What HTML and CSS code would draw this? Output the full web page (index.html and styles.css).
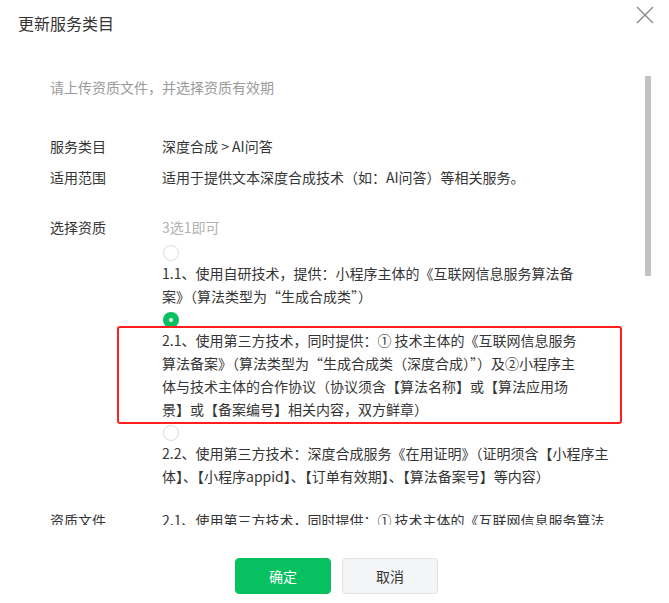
FILE: index.html
```html
<!DOCTYPE html>
<html lang="zh-CN">
<head>
  <meta charset="UTF-8" />
  <meta name="viewport" content="width=device-width, initial-scale=1.0" />
  <title>更新服务类目</title>
  <link rel="stylesheet" href="styles.css">
</head>
<body>
  <div class="dialog">
    <div class="dialog-hd">
      <h3 class="dialog-title">更新服务类目</h3>
      <button class="dialog-close" title="关闭">
        <svg width="18" height="18" viewBox="0 0 18 18"><path d="M1 1L17 17M17 1L1 17" stroke="#8a8a8a" stroke-width="1.4" fill="none"/></svg>
      </button>
    </div>

    <div class="dialog-bd">
      <p class="tips">请上传资质文件，并选择资质有效期</p>

      <div class="info">
        <div class="form-row">
          <span class="form-label">服务类目</span>
          <span class="form-value">深度合成 &gt; AI问答</span>
        </div>
        <div class="form-row">
          <span class="form-label">适用范围</span>
          <span class="form-value">适用于提供文本深度合成技术（如：AI问答）等相关服务。</span>
        </div>
      </div>

      <div class="form-row select-row">
        <span class="form-label">选择资质</span>
        <div class="form-value">
          <span class="hint">3选1即可</span>
          <ul class="options">
            <li class="option">
              <i class="radio"></i>
              <p class="option-text">1.1、使用自研技术，提供：小程序主体的《互联网信息服务算法备<br>案》（算法类型为“生成合成类”）</p>
            </li>
            <li class="option">
              <i class="radio checked"></i>
              <p class="option-text">2.1、使用第三方技术，同时提供：① 技术主体的《互联网信息服务<br>算法备案》（算法类型为“生成合成类（深度合成）”）及②小程序主<br>体与技术主体的合作协议（协议须含【算法名称】或【算法应用场<br>景】或【备案编号】相关内容，双方鲜章）</p>
              <div class="mark"></div>
            </li>
            <li class="option">
              <i class="radio"></i>
              <p class="option-text">2.2、使用第三方技术：深度合成服务《在用证明》（证明须含【小程序主<br>体】、【小程序appid】、【订单有效期】、【算法备案号】等内容）</p>
            </li>
          </ul>
        </div>
      </div>

      <div class="form-row file-row">
        <span class="form-label">资质文件</span>
        <span class="form-value">2.1、使用第三方技术，同时提供：① 技术主体的《互联网信息服务算法</span>
      </div>

      <div class="scroll-thumb"></div>
    </div>

    <div class="dialog-ft">
      <button class="btn btn-primary">确定</button>
      <button class="btn btn-default">取消</button>
    </div>
  </div>
</body>
</html>
```

FILE: styles.css
```css
body {
  margin: 0;
  padding: 0;
  background-color: #fff;
  font-family: "Noto Sans CJK SC", "Liberation Sans", sans-serif;
  font-size: 14px;
  color: #353535;
}

.dialog {
  width: 669px;
  height: 603px;
  position: relative;
  overflow: hidden;
}

.dialog-hd {
  height: 46px;
  padding: 12px 0 0 18px;
  box-sizing: border-box;
}

.dialog-title {
  margin: 0;
  font-size: 16px;
  font-weight: normal;
  line-height: 22px;
  color: #333;
}

.dialog-close {
  position: absolute;
  top: 6px;
  right: 15px;
  width: 18px;
  height: 18px;
  padding: 0;
  border: none;
  background: none;
  display: flex;
}

.dialog-bd {
  height: 479px;
  padding-left: 50px;
  box-sizing: border-box;
  overflow: hidden;
  position: relative;
}

.tips {
  margin: 30px 0 0;
  line-height: 23px;
  color: #9a9a9a;
}

.info {
  margin-top: 36px;
  display: flex;
  flex-direction: column;
  gap: 8px;
}

.form-row {
  display: grid;
  grid-template-columns: 112px 1fr;
  line-height: 23px;
}

.form-label {
  color: #353535;
}

.select-row {
  margin-top: 27px;
}

.hint {
  color: #b2b2b2;
}

.options {
  list-style: none;
  margin: 6px 0 0;
  padding: 0;
  display: flex;
  flex-direction: column;
  gap: 4px;
}

.option {
  position: relative;
}

.radio {
  display: block;
  width: 16px;
  height: 16px;
  border: 1px solid #dcdcdc;
  border-radius: 50%;
  box-sizing: border-box;
  margin-left: 1px;
}

.radio.checked {
  border: none;
  background-color: #07c160;
  position: relative;
}

.radio.checked::after {
  content: "";
  position: absolute;
  left: 6px;
  top: 6px;
  width: 4px;
  height: 4px;
  border-radius: 50%;
  background-color: #fff;
}

.option-text {
  margin: 1px 0 0;
  line-height: 23px;
  white-space: nowrap;
  color: #353535;
}

.mark {
  position: absolute;
  left: -45px;
  top: 14px;
  width: 505px;
  height: 98px;
  border: 2.5px solid #ff1f1f;
  border-radius: 3px;
  box-sizing: border-box;
}

.file-row {
  margin-top: 21px;
  white-space: nowrap;
}

.scroll-thumb {
  position: absolute;
  top: 30px;
  right: 18px;
  width: 6px;
  height: 200px;
  background-color: #c1c1c1;
}

.dialog-ft {
  display: flex;
  justify-content: center;
  gap: 11px;
  padding: 33px 0 0 4px;
}

.btn {
  width: 96px;
  height: 36px;
  border-radius: 4px;
  font-family: inherit;
  font-size: 14px;
  cursor: pointer;
}

.btn-primary {
  background-color: #07c160;
  border: 1px solid #07c160;
  color: #fff;
}

.btn-default {
  background-color: #f4f5f6;
  border: 1px solid #e1e2e3;
  color: #353535;
}
```
